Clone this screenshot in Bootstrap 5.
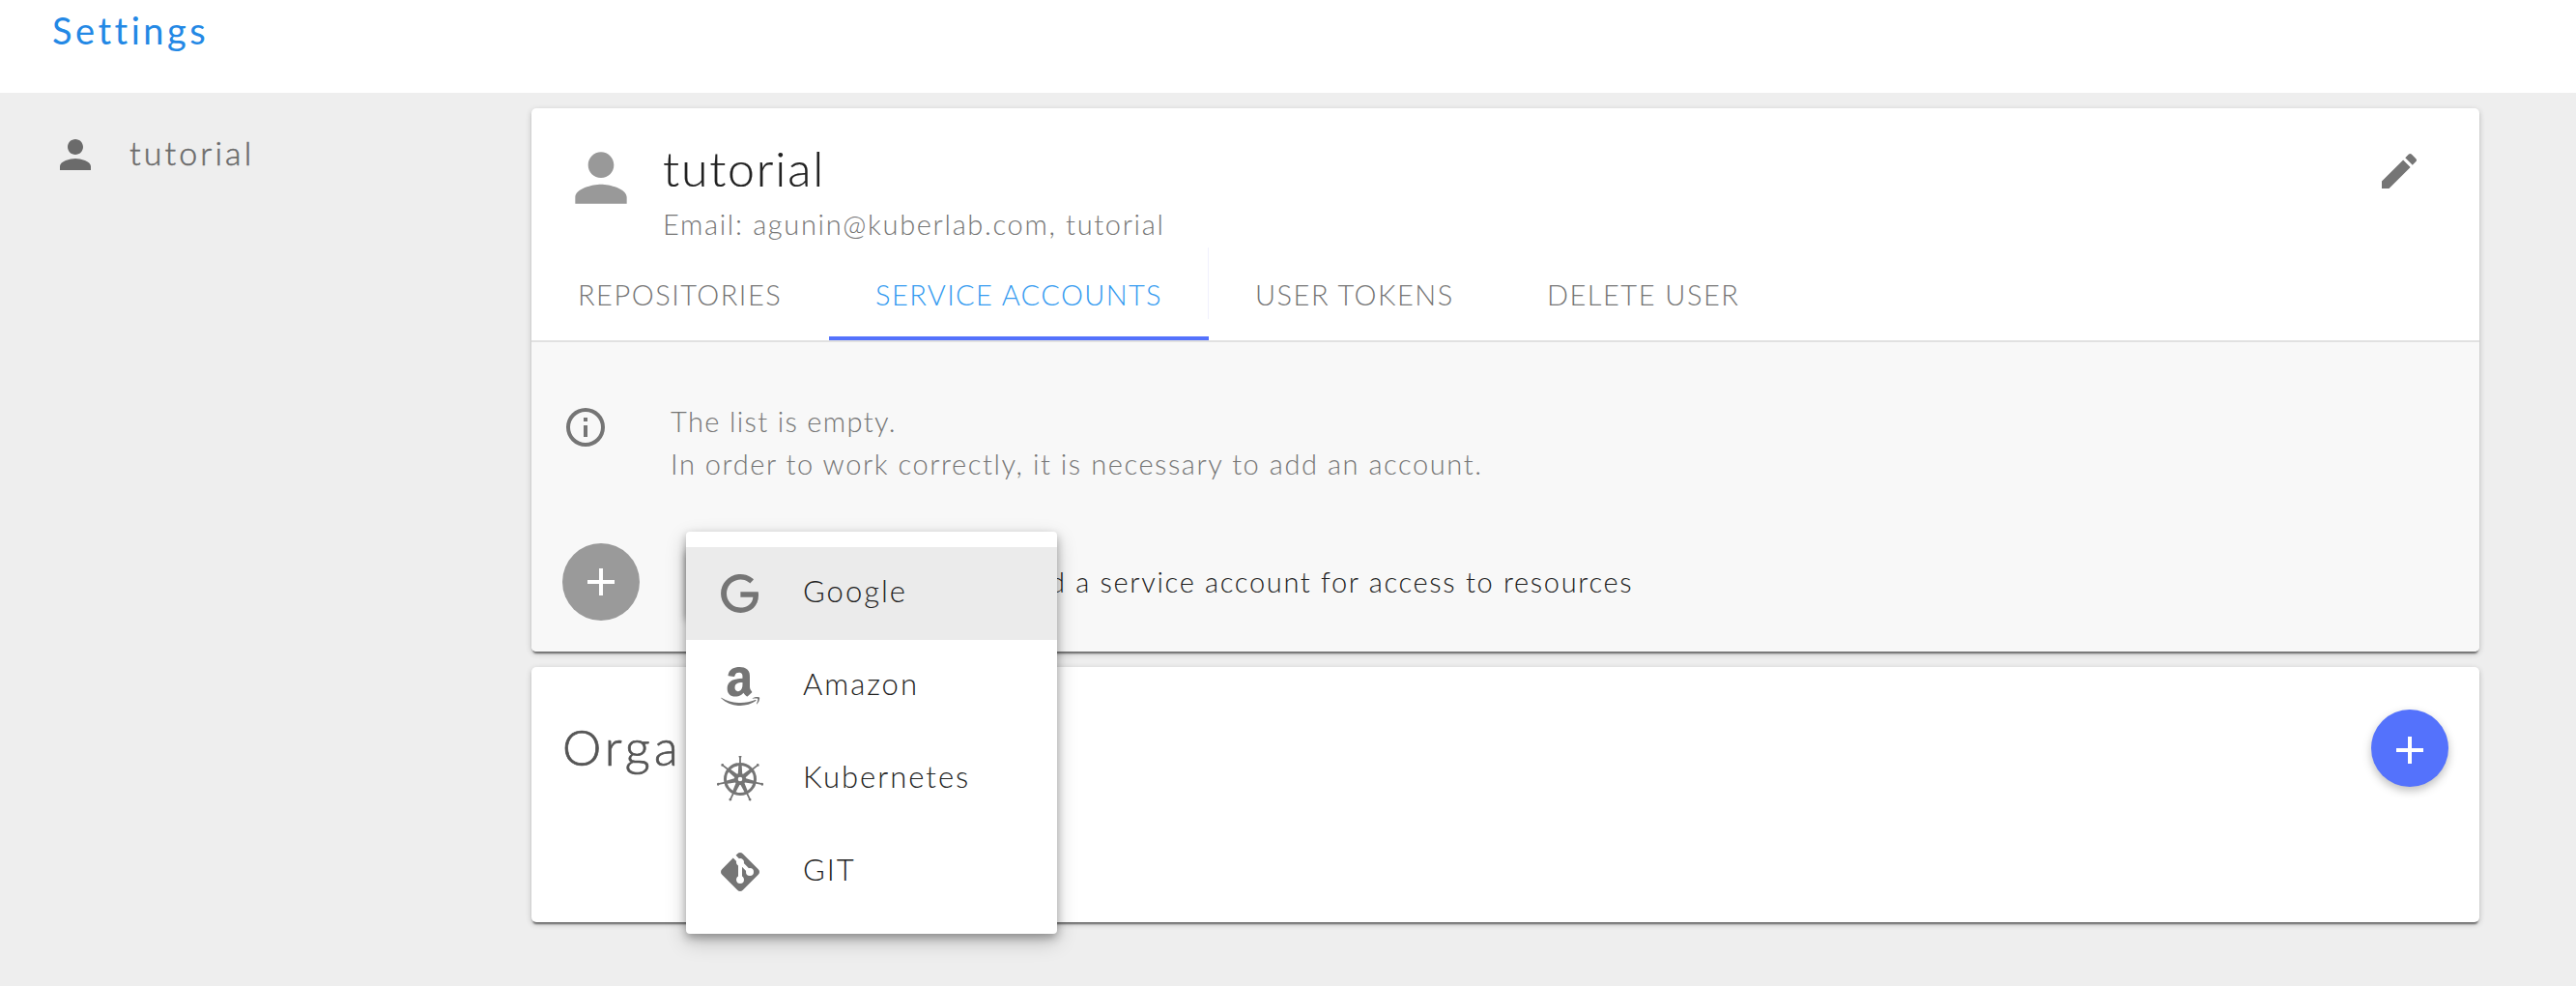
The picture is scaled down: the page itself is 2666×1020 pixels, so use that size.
<!DOCTYPE html>
<html lang="en">
<head>
<meta charset="utf-8">
<title>Settings</title>
<link href="https://cdn.jsdelivr.net/npm/bootstrap@5.3.0/dist/css/bootstrap.min.css" rel="stylesheet">
<script src="https://cdn.jsdelivr.net/npm/bootstrap@5.3.0/dist/js/bootstrap.bundle.min.js"></script>
<style>
body{font-family:Lato,"Open Sans",sans-serif;font-weight:300;background:#eee;color:#212121;font-variant-ligatures:none;font-size:29px;letter-spacing:1.57px;min-height:1020px}
svg{display:block;fill:currentColor;flex:none}
.topbar{height:96px;padding:1px 0 0 54px}
.topbar h1{font-size:38px;line-height:60px;letter-spacing:3.5px;font-weight:400;color:#2388e5;margin:0}
.side{width:550px;padding:40px 0 0 54px;color:#6b6b6b}
.side-name{font-size:34px;line-height:42px;letter-spacing:3.1px;padding-bottom:5px;margin-left:32px;-webkit-text-stroke:.5px}
.content-col{width:2016px;padding-top:16px;gap:16px}
.panel{background:#fff;border-radius:5px;box-shadow:0 2px 6px rgba(0,0,0,.2),0 2px 2px rgba(0,0,0,.14),0 4px 2px -2px rgba(0,0,0,.4)}
.panel-head{height:144px;padding:31px 60px 0 32px}
.avatar{color:#999;margin-top:1px;margin-right:24px}
.user-title{font-size:50px;line-height:62px;letter-spacing:1.8px;margin:0;font-weight:300;-webkit-text-stroke:.2px}
.user-mail{line-height:53px;color:#757575;letter-spacing:1.68px}
.edit-ic{color:#757575;margin-top:10px;margin-right:-1px}
.tabs-row{height:98px;border-bottom:2px solid #e1e1e1}
.tab-item{height:96px;padding:2px 0 0 48px;border:0;color:#757575;border-bottom:4px solid transparent;line-height:94px;white-space:nowrap;letter-spacing:1.5px;position:relative}
.tab-item.active{color:#339af0;border-bottom-color:#5472fc;letter-spacing:1.4px}
.tab-item.active::after{content:"";position:absolute;right:0;top:0;width:1px;height:74px;background:#f1f1fd}
.t1{width:308px}.t2{width:393px}.t3{width:302px}.t4{width:300px}
.panel-body{height:320px;background:#f8f8f8;border-radius:0 0 5px 5px;padding:60px 32px 0}
.info-ic{color:#757575;margin-top:4px;margin-right:64px}
.empty-text{line-height:44px;color:#757575;height:148px;margin:0;white-space:nowrap}
.empty-text .first{letter-spacing:1.35px}
.fab{width:80px;height:80px;border-radius:50%;color:#fff;flex:none}
.fab-gray{background:#9a9a9a}
.fab-blue{background:#5472fc;box-shadow:0 4px 10px rgba(0,0,0,.26)}
.pick-btn{width:320px;height:72px;margin-left:48px;border-radius:4px;background:#fafafa;box-shadow:0 4px 8px rgba(0,0,0,.4)}
.add-text{margin-left:18px;letter-spacing:1.68px;padding-bottom:1px;white-space:nowrap}
.org{height:264px;padding:44px 32px 0}
.org h2{font-size:51px;line-height:77px;letter-spacing:4px;font-weight:300;color:#555;margin:0;-webkit-text-stroke:.7px}
.pick-menu{position:absolute;left:160px;top:454px;width:384px;height:416px;padding:16px 0;background:#fff;border-radius:4px;box-shadow:0 4px 10px rgba(0,0,0,.3),0 8px 22px rgba(0,0,0,.2)}
.pick-menu a{height:96px;padding-left:32px;color:#212121;text-decoration:none;font-size:31px;letter-spacing:2px}
.pick-menu a.on{background:#ebebeb}
.pick-menu svg{color:#757575;margin-right:41px}
.pick-menu span{padding-bottom:5px}
</style>
</head>
<body>
<header class="topbar bg-white"><h1>Settings</h1></header>
<main class="d-flex">
  <aside class="side">
    <div class="d-flex align-items-center">
      <svg width="48" height="48" viewBox="0 0 24 24"><path d="M12 12c2.210 0 4-1.790 4-4s-1.790-4-4-4-4 1.790-4 4 1.790 4 4 4zm0 2c-2.670 0-8 1.340-8 4v2h16v-2c0-2.660-5.330-4-8-4z"/></svg>
      <span class="side-name">tutorial</span>
    </div>
  </aside>
  <div class="content-col position-relative d-flex flex-column">
    <section class="panel">
      <div class="panel-head d-flex">
        <svg class="avatar" width="80" height="80" viewBox="0 0 24 24"><path d="M12 12c2.210 0 4-1.790 4-4s-1.790-4-4-4-4 1.790-4 4 1.790 4 4 4zm0 2c-2.670 0-8 1.340-8 4v2h16v-2c0-2.660-5.330-4-8-4z"/></svg>
        <div class="flex-grow-1">
          <h2 class="user-title">tutorial</h2>
          <div class="user-mail">Email: agunin@kuberlab.com, tutorial</div>
        </div>
        <svg class="edit-ic" width="48" height="48" viewBox="0 0 24 24"><path d="M3 17.250V21h3.750L17.810 9.940l-3.750-3.750L3 17.250zM20.710 7.040c.39-.39.39-1.020 0-1.410l-2.340-2.340c-.39-.39-1.020-.39-1.410 0l-1.830 1.830 3.750 3.750 1.830-1.830z"/></svg>
      </div>
      <nav class="tabs-row d-flex">
        <div class="tab-item t1">REPOSITORIES</div>
        <div class="tab-item t2 active">SERVICE ACCOUNTS</div>
        <div class="tab-item t3">USER TOKENS</div>
        <div class="tab-item t4">DELETE USER</div>
      </nav>
      <div class="panel-body">
        <div class="d-flex">
          <svg class="info-ic" width="48" height="48" viewBox="0 0 24 24"><path fill-rule="evenodd" d="M12 2a10 10 0 1 0 0 20a10 10 0 1 0 0-20zM12 4a8 8 0 1 1 0 16a8 8 0 1 1 0-16zM11 7h2v2h-2zM11 11h2v6h-2z"/></svg>
          <p class="empty-text"><span class="first">The list is empty.</span><br>In order to work correctly, it is necessary to add an account.</p>
        </div>
        <div class="d-flex align-items-center">
          <div class="fab fab-gray d-flex align-items-center justify-content-center"><svg width="48" height="48" viewBox="0 0 24 24"><path d="M19 13h-6v6h-2v-6H5v-2h6V5h2v6h6v2z"/></svg></div>
          <div class="pick-btn"></div>
          <div class="add-text">Add a service account for access to resources</div>
        </div>
      </div>
    </section>
    <section class="panel org d-flex justify-content-between">
      <h2>Orga</h2>
      <div class="fab fab-blue d-flex align-items-center justify-content-center"><svg width="48" height="48" viewBox="0 0 24 24"><path d="M19 14h-6v6h-2v-6H5v-2h6V6h2v6h6v2z"/></svg></div>
    </section>
    <div class="pick-menu">
      <a class="on d-flex align-items-center" href="#"><svg width="48" height="48" viewBox="0 0 24 24"><path d="M21.350 11.100H12.180V13.830H18.690C18.360 17.640 15.190 19.270 12.190 19.270C8.360 19.270 5 16.250 5 12C5 7.900 8.200 4.730 12.200 4.730C15.290 4.730 17.100 6.700 17.100 6.700L19 4.720C19 4.720 16.560 2 12.100 2C6.420 2 2.030 6.800 2.030 12C2.030 17.050 6.160 22 12.250 22C17.600 22 21.500 18.330 21.500 12.910C21.500 11.760 21.350 11.100 21.350 11.100Z"/></svg><span>Google</span></a>
      <a class="d-flex align-items-center" href="#"><svg width="48" height="48" viewBox="0 0 24 24"><path d="M15.930 17.090C15.750 17.250 15.500 17.260 15.300 17.150C14.410 16.410 14.250 16.070 13.760 15.360C12.290 16.860 11.250 17.310 9.340 17.310C7.090 17.310 5.330 15.920 5.330 13.140C5.330 10.960 6.500 9.500 8.190 8.760C9.650 8.120 11.680 8 13.230 7.830V7.500C13.230 6.840 13.280 6.090 12.900 5.540C12.580 5.050 11.950 4.840 11.400 4.840C10.380 4.840 9.470 5.370 9.250 6.450C9.200 6.690 9 6.930 8.780 6.940L6.180 6.660C5.960 6.610 5.720 6.440 5.780 6.100C6.380 2.950 9.230 2 11.780 2C13.080 2 14.780 2.350 15.810 3.330C17.110 4.550 17 6.180 17 7.950V12.120C17 13.370 17.500 13.930 18 14.600C18.170 14.850 18.210 15.140 18 15.310L15.940 17.090H15.930M13.230 10.560V10C11.290 10 9.240 10.390 9.240 12.670C9.240 13.830 9.850 14.620 10.870 14.620C11.630 14.620 12.300 14.150 12.730 13.400C13.250 12.470 13.230 11.600 13.230 10.560M20.160 19.540C18 21.140 14.820 22 12.100 22C8.290 22 4.850 20.590 2.250 18.240C2.050 18.060 2.230 17.810 2.500 17.950C5.280 19.580 8.750 20.560 12.330 20.560C14.740 20.560 17.400 20.060 19.840 19.030C20.210 18.870 20.500 19.270 20.160 19.540M21.070 18.500C20.790 18.140 19.220 18.330 18.500 18.420C18.310 18.440 18.280 18.260 18.470 18.120C19.710 17.240 21.760 17.500 22 17.790C22.240 18.090 21.930 20.140 20.760 21.110C20.580 21.270 20.410 21.180 20.500 21C20.760 20.330 21.350 18.860 21.070 18.500Z"/></svg><span>Amazon</span></a>
      <a class="d-flex align-items-center" href="#"><svg width="48" height="48" viewBox="-24 -24 48 48">
        <defs><g id="spoke"><path d="M-.9-16V-22.300A1.400 1.400 0 1 1 .9-22.300V-16zM-1.600-15.500L-2.300-4h4.600L1.600-15.500z"/></g></defs>
        <circle r="15.500" fill="none" stroke="currentColor" stroke-width="3"/>
        <use href="#spoke"/><use href="#spoke" transform="rotate(51.430)"/><use href="#spoke" transform="rotate(102.860)"/><use href="#spoke" transform="rotate(154.290)"/><use href="#spoke" transform="rotate(205.710)"/><use href="#spoke" transform="rotate(257.140)"/><use href="#spoke" transform="rotate(308.570)"/>
        <circle r="4.200" fill="none" stroke="currentColor" stroke-width="3.800"/></svg><span>Kubernetes</span></a>
      <a class="d-flex align-items-center" href="#"><svg width="48" height="48" viewBox="0 0 24 24"><path d="M2.600 10.590L8.380 4.800L10.070 6.500C9.830 7.350 10.220 8.280 11 8.730V14.270C10.400 14.610 10 15.260 10 16A2 2 0 0 0 12 18A2 2 0 0 0 14 16C14 15.260 13.600 14.610 13 14.270V9.410L15.070 11.500C15 11.650 15 11.820 15 12A2 2 0 0 0 17 14A2 2 0 0 0 19 12A2 2 0 0 0 17 10C16.820 10 16.650 10 16.500 10.070L13.930 7.500C14.190 6.570 13.710 5.550 12.780 5.160C12.350 5 11.900 4.960 11.500 5.070L9.800 3.380L10.590 2.600C11.370 1.810 12.630 1.810 13.410 2.600L21.400 10.590C22.190 11.370 22.190 12.630 21.400 13.410L13.410 21.400C12.630 22.190 11.370 22.190 10.590 21.400L2.600 13.410C1.810 12.630 1.810 11.370 2.600 10.590Z"/></svg><span>GIT</span></a>
    </div>
  </div>
</main>
</body>
</html>
